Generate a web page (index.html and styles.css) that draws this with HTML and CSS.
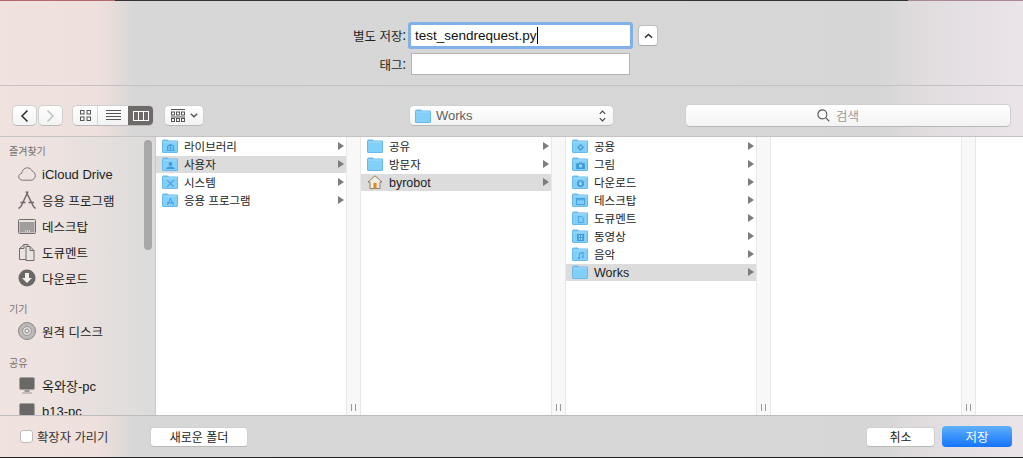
FILE: index.html
```html
<!DOCTYPE html>
<html lang="ko">
<head>
<meta charset="utf-8">
<title>별도 저장</title>
<link rel="stylesheet" href="styles.css">
</head>
<body>
<svg class="defs" width="0" height="0" aria-hidden="true">
  <defs>
    <symbol id="folder" viewBox="0 0 16 14">
      <path d="M.5 2V1.200C.5.8.8.5 1.200.5h4c.4 0 .6.1.9.4l1.100 1.100z" fill="#6cbdf0"/>
      <path d="M.5 2h15v11c0 .3-.2.5-.5.5H1c-.3 0-.5-.2-.5-.5z" fill="#82cff9" stroke="#68b9ea"/>
      <path d="M1 2.500h14v1H1z" fill="#a2defd"/>
    </symbol>
  </defs>
</svg>
<div class="window">
  <div class="edge"><span class="edge-l"></span><span class="edge-m"></span><span class="edge-r"></span></div>

  <section class="form">
    <label class="form-label ko">별도 저장:</label>
    <div class="name-field"><span class="name-text">test_sendrequest.py</span><span class="caret"></span></div>
    <button class="chev-btn" aria-label="접기">
      <svg width="9" height="6" viewBox="0 0 9 6"><path d="M1 4.600 4.500 1.400 8 4.600" fill="none" stroke="#333" stroke-width="1.500"/></svg>
    </button>
    <label class="form-label ko">태그:</label>
    <div class="tag-field"></div>
  </section>

  <section class="toolbar">
    <div class="nav-group">
      <button class="btn nav-btn">
        <svg width="9" height="14" viewBox="0 0 9 14"><path d="M7.500 1.500 2 7l5.500 5.500" fill="none" stroke="#2b2b2b" stroke-width="1.500"/></svg>
      </button>
      <button class="btn nav-btn">
        <svg width="9" height="14" viewBox="0 0 9 14"><path d="M1.500 1.500 7 7l-5.500 5.500" fill="none" stroke="#c2c2c2" stroke-width="1.500"/></svg>
      </button>
    </div>
    <div class="btn seg">
      <span class="seg-item seg-icon">
        <svg width="11" height="11" viewBox="0 0 11 11" fill="none" stroke="#555"><rect x=".5" y=".5" width="3.500" height="3.500"/><rect x="7" y=".5" width="3.500" height="3.500"/><rect x=".5" y="7" width="3.500" height="3.500"/><rect x="7" y="7" width="3.500" height="3.500"/></svg>
      </span>
      <span class="seg-item seg-list">
        <svg width="15" height="11" viewBox="0 0 15 11" stroke="#555"><path d="M0 .5h15M0 3.500h15M0 6.500h15M0 9.500h15"/></svg>
      </span>
      <span class="seg-item seg-col">
        <svg width="16" height="10" viewBox="0 0 16 10" fill="none" stroke="#fff" stroke-width="1"><rect x=".5" y=".5" width="15" height="9"/><path d="M5.500 0v10M10.500 0v10"/></svg>
      </span>
    </div>
    <button class="btn arrange">
      <svg width="15" height="13" viewBox="0 0 15 13" fill="none" stroke="#555"><path d="M0 .5h14"/><rect x=".5" y="3" width="3" height="3"/><rect x="5.500" y="3" width="3" height="3"/><rect x="10.500" y="3" width="3" height="3"/><path d="M0 8h14"/><rect x=".5" y="9.500" width="3" height="3"/><rect x="5.500" y="9.500" width="3" height="3"/><rect x="10.500" y="9.500" width="3" height="3"/></svg>
      <svg width="8" height="5" viewBox="0 0 8 5"><path d="M.8.8 4 3.800 7.200.8" fill="none" stroke="#555" stroke-width="1.400"/></svg>
    </button>
    <div class="btn path-pop">
      <svg class="ico" width="16" height="14"><use href="#folder"/></svg>
      <span class="path-name">Works</span>
      <svg class="updown" width="7" height="14" viewBox="0 0 7 14" fill="none" stroke="#444" stroke-width="1.100"><path d="M.8 4.800 3.500 2l2.700 2.800M.8 9.200 3.500 12l2.700-2.800"/></svg>
    </div>
    <div class="btn search">
      <svg width="13" height="13" viewBox="0 0 14 14" fill="none" stroke="#555" stroke-width="1.200"><circle cx="5.800" cy="5.800" r="4.800"/><path d="m9.300 9.300 3.900 3.900"/></svg>
      <span class="search-text ko">검색</span>
    </div>
  </section>

  <section class="browser">
    <aside class="sidebar">
      <div class="side-head ko first">즐겨찾기</div>
      <div class="side-row">
        <svg class="side-ico" width="18" height="14" viewBox="0 0 18 14" fill="none" stroke="#777"><path d="M4.500 13.200C2.300 13.200.7 11.700.7 9.800c0-1.700 1.200-3 2.900-3.300C4 3.200 6.500.8 9.300.8c2.300 0 4.200 1.400 5 3.500 1.800.5 3 2.300 3 4.300 0 2.500-1.900 4.600-4.300 4.600z"/></svg>
        <span class="side-name">iCloud Drive</span>
      </div>
      <div class="side-row">
        <svg class="side-ico" width="18" height="18" viewBox="0 0 18 18" fill="none" stroke="#6f6b6b" stroke-width="1.500"><path d="M10 .5 3 15.500M8 .5l7.500 15M2.500 11.500h5M10.500 11.500h5.500M.5 17.500l2.500-2M17.500 17.500l-2-2"/></svg>
        <span class="side-name ko">응용 프로그램</span>
      </div>
      <div class="side-row">
        <svg class="side-ico" width="18" height="15" viewBox="0 0 18 15"><rect x=".5" y=".5" width="17" height="14" rx="1" fill="#e8e2e0" stroke="#6f6b6b"/><rect x="1.500" y="3" width="15" height="10.500" fill="#a09d9d"/><path d="M7 11.500h1v1H7zM9 11.500h1v1H9zM11 11.500h1v1h-1z" fill="#fff"/></svg>
        <span class="side-name ko">데스크탑</span>
      </div>
      <div class="side-row">
        <svg class="side-ico" width="18" height="18" viewBox="0 0 18 18" fill="#e9e4e2" stroke="#6f6b6b"><path d="M1.500 5.500 6 1.500h4v15H1.500z"/><path d="M8 3.500h4l4 4v10H8z"/><path d="M12 3.500v4h4M6 1.500v4H1.500" fill="none"/></svg>
        <span class="side-name ko">도큐멘트</span>
      </div>
      <div class="side-row">
        <svg class="side-ico" width="18" height="18" viewBox="0 0 18 18"><circle cx="9" cy="9" r="8.500" fill="#6a6767"/><path d="M7 4h4v5h3l-5 5-5-5h3z" fill="#f2eeec"/></svg>
        <span class="side-name ko">다운로드</span>
      </div>
      <div class="side-head ko">기기</div>
      <div class="side-row up">
        <svg class="side-ico" width="18" height="18" viewBox="0 0 18 18"><circle cx="9" cy="9" r="8.500" fill="#bdbaba" stroke="#8a8787"/><circle cx="9" cy="9" r="4.500" fill="#dedbdb" stroke="#9a9797"/><circle cx="9" cy="9" r="2" fill="#eee" stroke="#888"/></svg>
        <span class="side-name ko">원격 디스크</span>
      </div>
      <div class="side-head ko">공유</div>
      <div class="side-row up">
        <svg class="side-ico" width="18" height="17" viewBox="0 0 18 17"><rect x="1.500" y=".5" width="15" height="12" rx="1.500" fill="#6a6767" stroke="#a3a0a0"/><path d="M6.500 13h5v2h-5zM4 15.500h10v1H4z" fill="#9a9797"/></svg>
        <span class="side-name">옥와장-pc</span>
      </div>
      <div class="side-row up">
        <svg class="side-ico" width="18" height="17" viewBox="0 0 18 17"><rect x="1.500" y=".5" width="15" height="12" rx="1.500" fill="#6a6767" stroke="#a3a0a0"/><path d="M6.500 13h5v2h-5zM4 15.500h10v1H4z" fill="#9a9797"/></svg>
        <span class="side-name">b13-pc</span>
      </div>
      <div class="side-scroll"></div>
    </aside>

    <div class="col">
      <div class="row">
        <svg class="ico" width="16" height="14"><use href="#folder"/></svg>
        <span class="row-name ko">라이브러리</span><i class="arrow"></i>
        <svg class="glyph" width="9" height="7" viewBox="0 0 10 8" fill="#3f9bd8"><path d="M5 0 10 2.500H0zM1 3h1.500v3.500H1zM4.200 3h1.600v3.500H4.200zM7.500 3H9v3.500H7.500zM0 7h10v1H0z"/></svg>
      </div>
      <div class="row sel">
        <svg class="ico" width="16" height="14"><use href="#folder"/></svg>
        <span class="row-name ko">사용자</span><i class="arrow"></i>
        <svg class="glyph" width="9" height="7" viewBox="0 0 10 8" fill="#3f9bd8"><circle cx="5" cy="2.200" r="2.200"/><path d="M0 8c0-2 2-3 5-3s5 1 5 3z"/></svg>
      </div>
      <div class="row">
        <svg class="ico" width="16" height="14"><use href="#folder"/></svg>
        <span class="row-name ko">시스템</span><i class="arrow"></i>
        <svg class="glyph" width="9" height="7" viewBox="0 0 10 8" fill="none" stroke="#3f9bd8" stroke-width="1.200"><path d="m1 0 8 8M9 0 1 8"/></svg>
      </div>
      <div class="row">
        <svg class="ico" width="16" height="14"><use href="#folder"/></svg>
        <span class="row-name ko">응용 프로그램</span><i class="arrow"></i>
        <svg class="glyph" width="9" height="7" viewBox="0 0 10 8" fill="none" stroke="#3f9bd8"><path d="M5.500 0 1.500 8M4.500 0l4 8M1 5.500h8"/></svg>
      </div>
    </div>
    <div class="resizer"><span class="grip"></span></div>

    <div class="col">
      <div class="row">
        <svg class="ico" width="16" height="14"><use href="#folder"/></svg>
        <span class="row-name ko">공유</span><i class="arrow"></i>
      </div>
      <div class="row">
        <svg class="ico" width="16" height="14"><use href="#folder"/></svg>
        <span class="row-name ko">방문자</span><i class="arrow"></i>
      </div>
      <div class="row sel">
        <svg class="ico" width="16" height="14" viewBox="0 0 16 14"><path d="M8 .8 1 7h2v6.500h10V7h2z" fill="#f3ecdf" stroke="#8c7f70"/><rect x="6.500" y="8" width="3" height="5.500" fill="#e8851f"/></svg>
        <span class="row-name lat">byrobot</span><i class="arrow"></i>
      </div>
    </div>
    <div class="resizer"><span class="grip"></span></div>

    <div class="col">
      <div class="row">
        <svg class="ico" width="16" height="14"><use href="#folder"/></svg>
        <span class="row-name ko">공용</span><i class="arrow"></i>
        <svg class="glyph" width="9" height="7" viewBox="0 0 10 8"><path d="M5 0 9 4 5 8 1 4z" fill="#3f9bd8"/><circle cx="5" cy="4" r="1.300" fill="#a2defd"/></svg>
      </div>
      <div class="row">
        <svg class="ico" width="16" height="14"><use href="#folder"/></svg>
        <span class="row-name ko">그림</span><i class="arrow"></i>
        <svg class="glyph" width="9" height="7" viewBox="0 0 10 8"><path d="M0 1.500h3L3.500.5h3l.5 1h3V8H0z" fill="#3f9bd8"/><circle cx="5" cy="4.500" r="1.800" fill="#a2defd"/></svg>
      </div>
      <div class="row">
        <svg class="ico" width="16" height="14"><use href="#folder"/></svg>
        <span class="row-name ko">다운로드</span><i class="arrow"></i>
        <svg class="glyph" width="9" height="7" viewBox="0 0 10 8"><circle cx="5" cy="4" r="4" fill="#3f9bd8"/><path d="M4 1.500h2V4h1.500L5 6.500 2.500 4H4z" fill="#a2defd"/></svg>
      </div>
      <div class="row">
        <svg class="ico" width="16" height="14"><use href="#folder"/></svg>
        <span class="row-name ko">데스크탑</span><i class="arrow"></i>
        <svg class="glyph" width="9" height="7" viewBox="0 0 10 8" fill="none" stroke="#3f9bd8"><rect x=".5" y=".5" width="9" height="7"/><path d="M0 2h10"/></svg>
      </div>
      <div class="row">
        <svg class="ico" width="16" height="14"><use href="#folder"/></svg>
        <span class="row-name ko">도큐멘트</span><i class="arrow"></i>
        <svg class="glyph" width="9" height="7" viewBox="0 0 10 8" fill="none" stroke="#3f9bd8"><path d="M2.500.5h3.500l2 2v5h-5.500z"/></svg>
      </div>
      <div class="row">
        <svg class="ico" width="16" height="14"><use href="#folder"/></svg>
        <span class="row-name ko">동영상</span><i class="arrow"></i>
        <svg class="glyph" width="9" height="7" viewBox="0 0 10 8"><rect x="1" y="0" width="8" height="8" fill="#3f9bd8"/><path d="M3 1.500h1.500v2H3zM5.500 1.500H7v2H5.500zM3 4.500h1.500v2H3zM5.500 4.500H7v2H5.500z" fill="#a2defd"/></svg>
      </div>
      <div class="row">
        <svg class="ico" width="16" height="14"><use href="#folder"/></svg>
        <span class="row-name ko">음악</span><i class="arrow"></i>
        <svg class="glyph" width="9" height="7" viewBox="0 0 10 8" fill="#3f9bd8"><path d="M3.500 1 8.500 0v6H7.500V1.300L4.500 2v5h-1z"/><circle cx="3" cy="7" r="1"/><circle cx="7.500" cy="6" r="1"/></svg>
      </div>
      <div class="row sel">
        <svg class="ico" width="16" height="14"><use href="#folder"/></svg>
        <span class="row-name lat">Works</span><i class="arrow"></i>
      </div>
    </div>
    <div class="resizer"><span class="grip"></span></div>

    <div class="col"></div>
    <div class="resizer"><span class="grip"></span></div>
    <div class="col-rest"></div>
  </section>

  <section class="footer">
    <div class="check-box"></div>
    <span class="check-label ko">확장자 가리기</span>
    <button class="btn foot-btn new-folder ko">새로운 폴더</button>
    <button class="btn foot-btn cancel ko">취소</button>
    <button class="save ko">저장</button>
  </section>
  <div class="base"></div>
</div>
</body>
</html>
```

FILE: styles.css
```css
* { box-sizing: border-box; }
html, body { margin: 0; padding: 0; }
body {
  width: 1023px;
  height: 458px;
  overflow: hidden;
  font-family: "Liberation Sans", "Noto Sans CJK KR", sans-serif;
  font-size: 12px;
  color: #2a2a2a;
}
.defs { position: absolute; }
button { font-family: inherit; padding: 0; margin: 0; }

.window {
  width: 1023px;
  height: 458px;
  display: flex;
  flex-direction: column;
  background: linear-gradient(90deg, #f0e3df 0, #eee0dc 100px, #d7d7d7 135px, #d6d6d6 880px, #e0dcde 920px, #ebe4e9 100%);
}
.ko { font-family: "Noto Sans CJK KR", "Liberation Sans", sans-serif; }

.edge { height: 1px; display: flex; flex: none; }
.edge-l { width: 115px; background: #b56a68; }
.edge-m { width: 793px; background: #333; }
.edge-r { flex: 1; background: #a88a94; }

.form {
  height: 85px;
  flex: none;
  border-bottom: 1px solid #c4c2c2;
  display: grid;
  grid-template-columns: 406px 219px 20px;
  grid-template-rows: 21px 22px;
  column-gap: 5px;
  row-gap: 7px;
  padding-top: 24px;
  align-items: center;
}
.form-label { font-size: 12.500px; text-align: right; color: #1e1e1e; }
.name-field {
  height: 21px;
  width: 219px;
  background: #fff;
  box-shadow: 0 0 0 3px #80b1e8;
  border-radius: 1px;
  display: flex;
  align-items: center;
  padding-left: 4px;
  font-size: 13.500px;
  color: #111;
}
.caret { width: 1px; height: 17px; background: #000; }
.chev-btn {
  width: 20px;
  height: 21px;
  margin-left: 3px;
  background: #fff;
  border: 1px solid #c0c0c0;
  border-bottom-color: #a8a8a8;
  border-radius: 4px;
  display: flex;
  align-items: center;
  justify-content: center;
}
.tag-field {
  grid-column: 2;
  width: 219px;
  height: 22px;
  background: #fff;
  border: 1px solid #b4b4b4;
}

.toolbar {
  height: 51px;
  flex: none;
  border-bottom: 1px solid #c4c2c2;
  display: flex;
  align-items: center;
  padding: 9px 0 0 12px;
}
.btn {
  background: linear-gradient(#fff, #f3f3f3);
  border: 1px solid #d0d0d0;
  border-bottom-color: #b8b8b8;
  border-radius: 5px;
}
.nav-group { display: flex; gap: 1px; }
.nav-btn {
  width: 25px;
  height: 21px;
  display: flex;
  align-items: center;
  justify-content: center;
}
.seg {
  margin-left: 9px;
  width: 82px;
  height: 21px;
  display: flex;
  overflow: hidden;
}
.seg-item { display: flex; align-items: center; justify-content: center; }
.seg-icon { width: 25px; border-right: 1px solid #d6d6d6; }
.seg-list { width: 30px; }
.seg-col { flex: 1; background: #6e6a6a; }
.arrange {
  margin-left: 10px;
  width: 40px;
  height: 21px;
  display: flex;
  align-items: center;
  justify-content: center;
  gap: 4px;
}
.path-pop {
  margin-left: 205px;
  width: 205px;
  height: 21px;
  display: flex;
  align-items: center;
  padding-left: 5px;
}
.path-name { margin-left: 5px; font-size: 13px; color: #5f5f5f; flex: 1; }
.updown { margin-right: 7px; }
.search {
  margin-left: 71px;
  width: 326px;
  height: 23px;
  display: flex;
  align-items: center;
  justify-content: center;
  gap: 6px;
  padding-right: 20px;
  color: #999;
  font-size: 12.500px;
}

.browser {
  height: 278px;
  flex: none;
  display: flex;
  background: #fff;
  overflow: hidden;
}
.sidebar {
  position: relative;
  width: 156px;
  flex: none;
  padding-top: 3px;
  border-right: 1px solid #c8c8c8;
  background: linear-gradient(90deg, #f0e4e1, #ece2df 60px, #dcdbdb 100%);
  overflow: hidden;
}
.side-head {
  height: 21px;
  margin-top: 7px;
  padding-left: 9px;
  font-size: 10px;
  line-height: 21px;
  color: #737070;
}
.side-head.first { margin-top: 0; }
.side-row {
  height: 26px;
  display: flex;
  align-items: center;
  padding-left: 18px;
}
.side-row.up { padding-bottom: 2px; }
.side-ico { flex: none; margin-right: 6px; }
.side-name { font-size: 13px; color: #222; }
.side-name.ko { font-size: 12.500px; }
.side-scroll {
  position: absolute;
  left: 144px;
  top: 3px;
  width: 8px;
  height: 110px;
  border-radius: 4px;
  background: #a9a7a7;
}

.col {
  width: 190px;
  flex: none;
  padding-top: 1px;
}
.col-rest { flex: 1; }
.row {
  position: relative;
  height: 17px;
  margin-bottom: 1px;
  display: flex;
  align-items: center;
  padding: 0 0 1px 6px;
}
.row.sel { background: #dcdcdc; }
.ico { flex: none; }
.row-name { margin-left: 6px; flex: 1; color: #1c1c1c; }
.row-name.ko { font-size: 11.500px; }
.row-name.lat { font-size: 12.500px; padding-top: 2px; }
.arrow {
  width: 0;
  height: 0;
  margin-right: 2px;
  border-left: 6px solid #7d7d7d;
  border-top: 4.500px solid transparent;
  border-bottom: 4.500px solid transparent;
}
.glyph { position: absolute; left: 10px; top: 6px; }
.resizer {
  width: 15px;
  flex: none;
  background: #f8f8f8;
  border-left: 1px solid #e8e8e8;
  border-right: 1px solid #e8e8e8;
  display: flex;
  align-items: flex-end;
  justify-content: center;
  padding-bottom: 4px;
}
.grip {
  width: 5px;
  height: 7px;
  border-left: 1px solid #999;
  border-right: 1px solid #999;
}

.footer {
  height: 42px;
  flex: none;
  border-top: 1px solid #bdbdbd;
  display: flex;
  align-items: center;
  padding-left: 20px;
}
.check-box {
  width: 13px;
  height: 13px;
  background: #fff;
  border: 1px solid #bcbcbc;
  border-radius: 3px;
}
.check-label { margin-left: 4px; width: 113px; font-size: 12.300px; color: #333; }
.foot-btn { height: 20px; font-size: 12px; color: #1c1c1c; background: #fff; border-radius: 4px; }
.new-folder { width: 98px; }
.cancel { width: 69px; margin-left: 618px; }
.save {
  width: 70px;
  height: 21px;
  margin-left: 7px;
  border: 0;
  border-radius: 4px;
  background: linear-gradient(#5fb0fb, #1474fb);
  color: #fff;
  font-size: 12.500px;
}
.base { flex: 1; background: #222; }
```
